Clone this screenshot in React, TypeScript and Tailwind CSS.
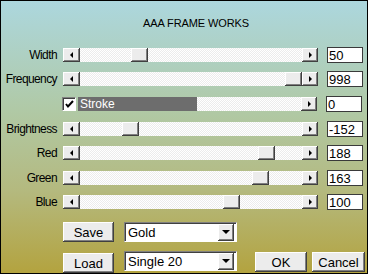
import React from 'react';

// classic raised 3d edge
const raised =
  'bg-[#ececec] shadow-[inset_-1px_-1px_#404040,inset_1px_1px_#ffffff,inset_-2px_-2px_#808080]';
const track =
  'bg-[conic-gradient(#ececec_25%,#ffffff_0_50%,#ececec_0_75%,#ffffff_0)] bg-[length:2px_2px]';

interface Row {
  label: string;
  value: string;
  thumb: number;
  mt: string;
}

const rows: Row[] = [
  { label: 'Width', value: '50', thumb: 51, mt: 'mt-[17px]' },
  { label: 'Frequency', value: '998', thumb: 205, mt: 'mt-[8px]' },
];

const rows2: Row[] = [
  { label: 'Brightness', value: '-152', thumb: 42, mt: 'mt-[9px]' },
  { label: 'Red', value: '188', thumb: 178, mt: 'mt-[8px]' },
  { label: 'Green', value: '163', thumb: 172, mt: 'mt-[9px]' },
  { label: 'Blue', value: '100', thumb: 143, mt: 'mt-[8px]' },
];

const LeftArrow = () => (
  <div className={`w-[17px] h-[14px] flex items-center justify-center ${raised}`}>
    <div className="w-0 h-0 border-y-[3px] border-y-transparent border-r-[3px] border-r-black" />
  </div>
);

const RightArrow = () => (
  <div className={`w-[16px] h-[14px] flex items-center justify-center ${raised}`}>
    <div className="w-0 h-0 border-y-[3px] border-y-transparent border-l-[3px] border-l-black" />
  </div>
);

const Edit: React.FC<{ value: string }> = ({ value }) => (
  <div className="ml-[9px] w-[36px] h-[16px] bg-white border border-[#3a3a3a] flex items-center pl-[1px] text-[13px] leading-none">
    {value}
  </div>
);

const SliderRow: React.FC<{ row: Row }> = ({ row }) => (
  <div className={`flex items-center h-[16px] ${row.mt}`}>
    <div className="w-[57px] text-right pr-[1px] text-[12px] leading-none tracking-[-0.6px] whitespace-nowrap">
      {row.label}
    </div>
    <div className="ml-[5px] flex">
      <LeftArrow />
      <div className={`relative w-[222px] h-[14px] ${track}`}>
        <div
          className={`absolute top-0 w-[17px] h-[14px] ${raised}`}
          style={{ left: row.thumb }}
        />
      </div>
      <RightArrow />
    </div>
    <Edit value={row.value} />
  </div>
);

const Combo: React.FC<{ text: string }> = ({ text }) => (
  <div className="ml-[10px] w-[113px] h-[20px] bg-white border-t border-l border-[#808080] border-r border-b border-r-white border-b-white shadow-[inset_1px_1px_#404040] flex items-center">
    <div className="flex-1 pl-[3px] text-[13px] leading-none">{text}</div>
    <div className={`w-[16px] h-[17px] mr-[2px] flex items-center justify-center ${raised}`}>
      <div className="w-0 h-0 border-x-[4px] border-x-transparent border-t-[4px] border-t-black" />
    </div>
  </div>
);

const Btn: React.FC<{ text: string; w: string; cls?: string }> = ({ text, w, cls = '' }) => (
  <div className={`${w} h-[20px] flex items-center justify-center text-[13px] leading-none ${raised} ${cls}`}>
    {text}
  </div>
);

export default function App() {
  return (
    <div className="w-[368px] h-[274px] overflow-hidden border border-black font-['Liberation_Sans',Arial,sans-serif] text-black bg-[linear-gradient(180deg,#acd7de_0%,#b0c9a6_40%,#b4b97e_70%,#b3a33f_100%)] flex flex-col">
      <div className="pl-[142px] pt-[15px] text-[11px] leading-[14px] tracking-[-0.1px] whitespace-nowrap">AAA FRAME WORKS</div>

      {rows.map((r) => (
        <SliderRow key={r.label} row={r} />
      ))}

      {/* Stroke row */}
      <div className="flex items-center h-[16px] mt-[9px]">
        <div className="ml-[61px] w-[14px] h-[14px] bg-white border-t border-l border-[#808080] border-r border-b border-r-white border-b-white shadow-[inset_1px_1px_#404040] flex items-center justify-center">
          <svg width="9" height="9" viewBox="0 0 9 9">
            <path d="M1 4 L3 6.5 L8 1" stroke="black" strokeWidth="2" fill="none" />
          </svg>
        </div>
        <div className="ml-[2px] w-[119px] h-[14px] bg-[#6d6d6d] text-white text-[12px] leading-[14px] pl-[2px]">
          Stroke
        </div>
        <div className={`w-[104px] h-[14px] ${track}`} />
        <RightArrow />
        <Edit value="0" />
      </div>

      {rows2.map((r) => (
        <SliderRow key={r.label} row={r} />
      ))}

      {/* presets */}
      <div className="flex items-end h-[20px] mt-[12px] pl-[62px]">
        <Btn text="Save" w="w-[51px]" cls="h-[18px]" />
        <Combo text="Gold" />
      </div>
      <div className="flex items-start h-[22px] mt-[9px] pl-[62px]">
        <Btn text="Load" w="w-[51px]" cls="mt-[2px]" />
        <Combo text="Single 20" />
        <Btn text="OK" w="w-[52px]" cls="ml-[18px] mt-[1px]" />
        <Btn text="Cancel" w="w-[53px]" cls="ml-[5px] mt-[1px]" />
      </div>
    </div>
  );
}
